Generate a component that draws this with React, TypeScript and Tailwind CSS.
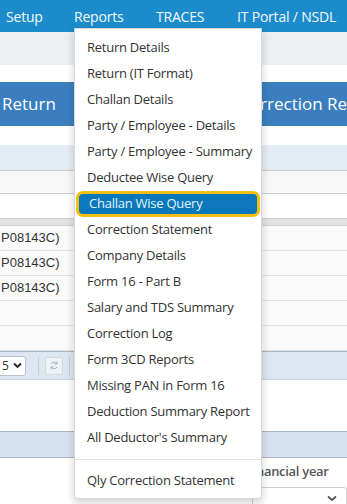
import React from 'react';

const menuItems = [
  'Return Details',
  'Return (IT Format)',
  'Challan Details',
  'Party / Employee - Details',
  'Party / Employee - Summary',
  'Deductee Wise Query',
  'Challan Wise Query',
  'Correction Statement',
  'Company Details',
  'Form 16 - Part B',
  'Salary and TDS Summary',
  'Correction Log',
  'Form 3CD Reports',
  'Missing PAN in Form 16',
  'Deduction Summary Report',
  "All Deductor's Summary",
];

const ui = "font-['Open_Sans','Noto_Sans',sans-serif]";

export default function App() {
  const active = 'Challan Wise Query';

  return (
    <div className={`relative w-[347px] h-[504px] overflow-hidden bg-white ${ui}`}>
      {/* top nav */}
      <nav className="h-[32px] bg-[#1b8bcb] flex items-center pl-[6px] text-[14px] tracking-[-0.2px] text-[#f4f9fd] whitespace-nowrap">
        <span className="w-[68px]">Setup</span>
        <span className="w-[82px]">Reports</span>
        <span className="w-[81px]">TRACES</span>
        <span>IT Portal / NSDL</span>
      </nav>

      <div className="h-[33px] bg-[#eceef1]" />
      <div className="h-[17px] bg-white" />

      {/* page header */}
      <div className="h-[44px] bg-[#3b7ebf] flex items-center justify-between text-[17px] text-white whitespace-nowrap overflow-hidden">
        <span className="pl-[2px]">Return</span>
        <span className="mr-[-34px]">Correction Return</span>
      </div>

      <div className="h-[19px] bg-white" />
      <div className="h-[26px] bg-[#e4ecf6] border-b border-[#c8cdd3]" />
      <div className="h-[23px] bg-[#f8f8f8] border-b border-[#c8cdd3]" />
      <div className="h-[24px] bg-white" />
      <div className="h-[8px] bg-[#e2e2e2] border-y border-[#cfcfcf]" />

      {/* table rows */}
      {['P08143C)', 'P08143C)', 'P08143C)', '', ''].map((t, i) => (
        <div
          key={i}
          className="h-[25px] bg-[#fafafa] border-b border-[#e2e2e2] flex items-center pl-[1px] text-[13px] text-[#333] font-['Liberation_Sans',Arial,sans-serif]"
        >
          {t}
        </div>
      ))}

      {/* pager toolbar */}
      <div className="h-[28px] bg-[#dde7f2] border-t border-[#a9b6c4] flex items-center gap-[6px]">
        <div className="w-[30px] h-[20px] ml-[-4px] bg-white border border-[#b9c3cd] rounded-[3px] flex items-center justify-between px-[5px] text-[12px] text-[#333]">
          <span>5</span>
          <svg width="9" height="7" viewBox="0 0 9 7" className="mr-[-2px]">
            <path d="M1 1.5 L4.5 5 L8 1.5" stroke="#222" strokeWidth="1.8" fill="none" />
          </svg>
        </div>
        <div className="w-px h-[18px] bg-[#c4ccd6] ml-[6px]" />
        <div className="w-[18px] h-[18px] bg-[#eef2f6] border border-[#d3d9e0] rounded-[2px] flex items-center justify-center">
          <svg width="10" height="11" viewBox="0 0 10 11">
            <path d="M2 4 A3.5 3.5 0 0 1 8 4" stroke="#a7b1bb" strokeWidth="1" fill="none" />
            <path d="M8 7 A3.5 3.5 0 0 1 2 7" stroke="#a7b1bb" strokeWidth="1" fill="none" />
            <path d="M8 1.5 V4 H5.5" stroke="#a7b1bb" strokeWidth="1" fill="none" />
            <path d="M2 9.5 V7 H4.5" stroke="#a7b1bb" strokeWidth="1" fill="none" />
          </svg>
        </div>
        <div className="w-px h-[18px] bg-[#c4ccd6]" />
      </div>

      <div className="h-[52px] bg-white border-t border-[#c8d2dc]" />
      <div className="h-[27px] bg-[#d6e2ef] border-y border-[#a9b6c4]" />

      {/* filter area */}
      <div className="flex justify-end pt-[4px]">
        <div className="w-[95px]">
          <div className="text-[13px] font-semibold text-[#555] whitespace-nowrap tracking-[-0.3px] ml-[-6px]">Financial year</div>
          <div className="mt-[5px] h-[24px] border border-[#cfcfcf] rounded-[3px] flex items-center justify-end pr-[9px]">
            <svg width="10" height="7" viewBox="0 0 10 7">
              <path d="M1 1.5 L5 5 L9 1.5" stroke="#555" strokeWidth="1.8" fill="none" />
            </svg>
          </div>
        </div>
      </div>

      {/* Reports dropdown */}
      <div className="absolute left-[74px] top-[28px] w-[188px] bg-white border border-[#d8d8d8] rounded-b-[4px] shadow-[0_4px_10px_rgba(0,0,0,0.18)] pt-[6px] pb-[4px] text-[13px] tracking-[-0.25px] text-[#333]">
        {menuItems.map(item =>
          item === active ? (
            <div
              key={item}
              className="h-[26px] mx-[1px] flex items-center pl-[10px] bg-[#0a78ba] text-[#e2f4ff] border-[3px] border-[#f3bf14] rounded-[7px] whitespace-nowrap"
            >
              {item}
            </div>
          ) : (
            <div key={item} className="h-[26px] flex items-center pl-[12px] whitespace-nowrap">
              {item}
            </div>
          )
        )}
        <div className="h-px bg-[#e3e3e3] my-[8px]" />
        <div className="h-[26px] flex items-center pl-[12px] whitespace-nowrap">Qly Correction Statement</div>
      </div>
    </div>
  );
}
